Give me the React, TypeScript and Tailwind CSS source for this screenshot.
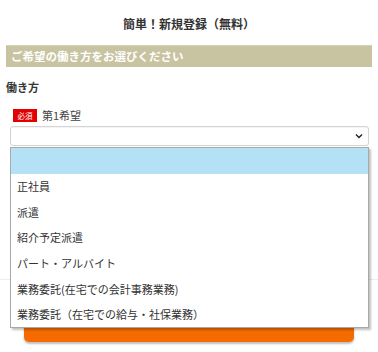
import { useState } from "react";

const options = [
  "",
  "正社員",
  "派遣",
  "紹介予定派遣",
  "パート・アルバイト",
  "業務委託(在宅での会計事務業務)",
  "業務委託（在宅での給与・社保業務）",
];

export default function App() {
  const [open] = useState(true);

  return (
    <div
      className="relative min-h-[352px] w-[378px] bg-white px-[6px] text-[#333]"
      style={{ fontFamily: '"Noto Sans CJK JP", "Noto Sans", sans-serif' }}
    >
      {/* Title */}
      <h1 className="pt-[16px] text-center text-[12px] font-bold leading-[16px]">
        簡単！新規登録（無料）
      </h1>

      {/* Section bar */}
      <div className="mt-[13px] h-[22px] border-t border-[#d6d2b6] bg-[#c8c3a1] pl-[5px] text-[11.5px] font-bold leading-[21px] text-white">
        ご希望の働き方をお選びください
      </div>

      <div className="mt-[12px] text-[11px] font-bold leading-[16px]">働き方</div>

      {/* Label */}
      <div className="mt-[14px] ml-[7px] flex h-[13px] items-center gap-[5px]">
        <span className="flex h-[13px] w-[24px] items-center justify-center bg-[#e20000] text-[7.5px] text-white">
          必須
        </span>
        <span className="text-[11px] text-[#444]">第1希望</span>
      </div>

      {/* Select */}
      <div className="mt-[4px] ml-[4px] flex h-[20px] w-[359px] items-center justify-end rounded-[3px] border border-[#d4d4d4] bg-white pr-[5px] shadow-[inset_0_1px_1px_rgba(0,0,0,0.05)]">
        <svg width="8" height="6" viewBox="0 0 8 6" fill="none">
          <path d="M1 1.5 L4 4.5 L7 1.5" stroke="#222" strokeWidth="1.4" />
        </svg>
      </div>

      {/* Content under the dropdown */}
      <div className="mt-[133px] -mx-[6px] border-t border-[#eeeeee]" />
      <div className="mt-[26px] ml-[18px] h-[36px] w-[330px] rounded-[5px] bg-[#f56b00] shadow-[0_2px_2px_rgba(0,0,0,0.25)]" />

      {/* Open dropdown */}
      {open && (
        <ul className="absolute left-[10px] top-[147px] w-[359px] border border-[#a9a9a9] bg-white shadow-[2px_2px_2px_rgba(0,0,0,0.25)]">
          {options.map((opt, i) => (
            <li
              key={i}
              className={`flex h-[25.6px] items-center pl-[6px] text-[11px] text-[#333] ${
                i === 0 ? "bg-[#b4e1f6]" : ""
              }`}
            >
              {opt}
            </li>
          ))}
        </ul>
      )}
    </div>
  );
}
